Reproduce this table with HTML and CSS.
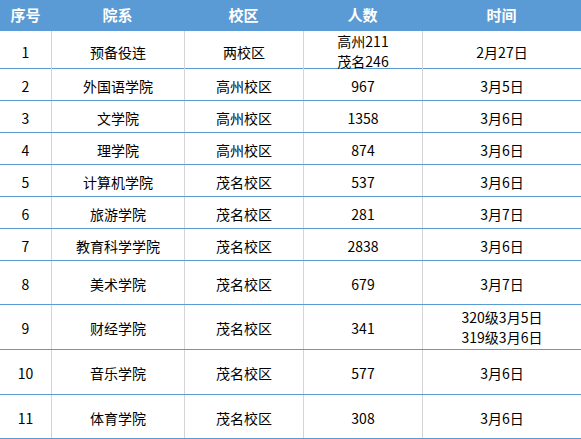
FILE: index.html
```html
<!DOCTYPE html>
<html lang="zh-CN">
<head>
<meta charset="utf-8">
<title>开学时间表</title>
<link rel="stylesheet" href="styles.css">
</head>
<body>
<div class="table">
  <div class="row head">
    <div class="cell">序号</div><div class="cell">院系</div><div class="cell">校区</div><div class="cell">人数</div><div class="cell">时间</div>
  </div>
  <div class="row h38">
    <div class="cell">1</div><div class="cell">预备役连</div><div class="cell">两校区</div><div class="cell two">高州211<br>茂名246</div><div class="cell">2月27日</div>
  </div>
  <div class="row h32">
    <div class="cell">2</div><div class="cell">外国语学院</div><div class="cell">高州校区</div><div class="cell">967</div><div class="cell">3月5日</div>
  </div>
  <div class="row h32">
    <div class="cell">3</div><div class="cell">文学院</div><div class="cell">高州校区</div><div class="cell">1358</div><div class="cell">3月6日</div>
  </div>
  <div class="row h32">
    <div class="cell">4</div><div class="cell">理学院</div><div class="cell">高州校区</div><div class="cell">874</div><div class="cell">3月6日</div>
  </div>
  <div class="row h32">
    <div class="cell">5</div><div class="cell">计算机学院</div><div class="cell">茂名校区</div><div class="cell">537</div><div class="cell">3月6日</div>
  </div>
  <div class="row h32">
    <div class="cell">6</div><div class="cell">旅游学院</div><div class="cell">茂名校区</div><div class="cell">281</div><div class="cell">3月7日</div>
  </div>
  <div class="row h32">
    <div class="cell">7</div><div class="cell">教育科学学院</div><div class="cell">茂名校区</div><div class="cell">2838</div><div class="cell">3月6日</div>
  </div>
  <div class="row h44">
    <div class="cell">8</div><div class="cell">美术学院</div><div class="cell">茂名校区</div><div class="cell">679</div><div class="cell">3月7日</div>
  </div>
  <div class="row h45">
    <div class="cell">9</div><div class="cell">财经学院</div><div class="cell">茂名校区</div><div class="cell">341</div><div class="cell two">320级3月5日<br>319级3月6日</div>
  </div>
  <div class="row h45">
    <div class="cell">10</div><div class="cell">音乐学院</div><div class="cell">茂名校区</div><div class="cell">577</div><div class="cell">3月6日</div>
  </div>
  <div class="row h44">
    <div class="cell">11</div><div class="cell">体育学院</div><div class="cell">茂名校区</div><div class="cell">308</div><div class="cell">3月6日</div>
  </div>
</div>
</body>
</html>
```
FILE: styles.css
```css
html, body {
  margin: 0;
  padding: 0;
  background: #ffffff;
}
.table {
  width: 581px;
  font-family: "Noto Sans CJK SC", "Noto Sans", sans-serif;
  font-size: 14px;
  color: #000000;
}
.row {
  display: grid;
  grid-template-columns: 51px 133px 119px 119px 159px;
  box-sizing: border-box;
  border-bottom: 1px solid #5b9bd5;
}
.cell {
  display: flex;
  align-items: center;
  justify-content: center;
  text-align: center;
  line-height: 18px;
  padding-top: 2px;
  box-sizing: border-box;
}
.cell.two {
  flex-direction: column;
  line-height: 20px;
  padding-top: 0;
}
.row .cell + .cell {
  border-left: 1px solid #d4d4d4;
}
.head {
  height: 31px;
  background: #5b9bd5;
  color: #ffffff;
  font-weight: bold;
  font-size: 15px;
}
.head .cell + .cell {
  border-left: none;
}
.head .cell {
  padding-top: 0;
}
.h38 { height: 38px; }
.h32 { height: 32px; }
.h44 { height: 44px; }
.h45 { height: 45px; }
```
